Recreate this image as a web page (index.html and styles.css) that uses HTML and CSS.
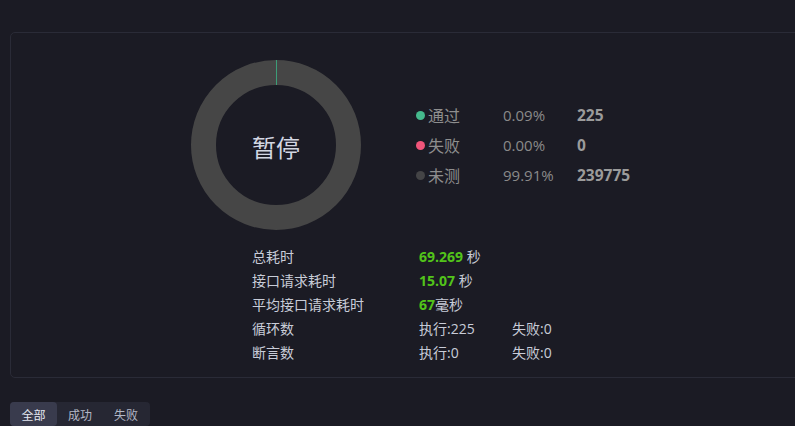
FILE: index.html
```html
<!DOCTYPE html>
<html lang="zh">
<head>
<meta charset="utf-8">
<link rel="stylesheet" href="styles.css">
</head>
<body>
<div class="page">
  <section class="card">
    <div class="top">
      <div class="donut">
        <svg width="170" height="170" viewBox="0 0 170 170">
          <circle cx="85" cy="85" r="72.5" fill="none" stroke="#464646" stroke-width="25"/>
          <line x1="85.5" y1="0" x2="85.5" y2="25" stroke="#3c9d78" stroke-width="1"/>
        </svg>
        <div class="donut-label">暂停</div>
      </div>
      <ul class="legend">
        <li class="legend-row"><span class="dot dot-pass"></span><span class="l-name">通过</span><span class="l-pct">0.09%</span><span class="l-count">225</span></li>
        <li class="legend-row"><span class="dot dot-fail"></span><span class="l-name">失败</span><span class="l-pct">0.00%</span><span class="l-count">0</span></li>
        <li class="legend-row"><span class="dot dot-none"></span><span class="l-name">未测</span><span class="l-pct">99.91%</span><span class="l-count">239775</span></li>
      </ul>
    </div>
    <div class="stats">
      <div class="s-row"><span class="s-label">总耗时</span><span class="s-val"><b class="g">69.269</b> 秒</span></div>
      <div class="s-row"><span class="s-label">接口请求耗时</span><span class="s-val"><b class="g">15.07</b> 秒</span></div>
      <div class="s-row"><span class="s-label">平均接口请求耗时</span><span class="s-val"><b class="g">67</b>毫秒</span></div>
      <div class="s-row"><span class="s-label">循环数</span><span class="s-val">执行:225</span><span class="s-third">失败:0</span></div>
      <div class="s-row"><span class="s-label">断言数</span><span class="s-val">执行:0</span><span class="s-third">失败:0</span></div>
    </div>
  </section>
  <nav class="tabs">
    <span class="tab active">全部</span>
    <span class="tab">成功</span>
    <span class="tab">失败</span>
  </nav>
</div>
</body>
</html>
```

FILE: styles.css
```css
html, body {
  margin: 0;
  padding: 0;
  background: #1b1b24;
  overflow: hidden;
}
body {
  width: 795px;
  height: 426px;
  font-family: "Open Sans", "Noto Sans CJK SC", sans-serif;
  color: #c8ccd8;
}
.page {
  padding: 32px 0 0 10px;
}
.card {
  width: 820px;
  height: 346px;
  border: 1px solid #2a2b37;
  border-radius: 5px;
  box-sizing: border-box;
  padding: 27px 0 0 180px;
}
.top {
  display: flex;
  align-items: center;
}
.donut {
  position: relative;
  width: 170px;
  height: 170px;
}
.donut svg { display: block; }
.donut-label {
  position: absolute;
  inset: 0;
  display: flex;
  align-items: center;
  justify-content: center;
  font-family: "Noto Sans CJK SC", sans-serif;
  font-size: 24px;
  color: #d2d6e2;
  padding-top: 2px;
}
.legend {
  list-style: none;
  margin: 0 0 0 55px;
  padding: 0;
  display: flex;
  flex-direction: column;
  gap: 8px;
  margin-top: 0px;
}
.legend-row {
  display: flex;
  align-items: center;
  height: 22px;
}
.dot {
  width: 9px;
  height: 9px;
  border-radius: 50%;
  margin-right: 3px;
}
.dot-pass { background: #45b98c; }
.dot-fail { background: #f0557a; }
.dot-none { background: #444446; }
.l-name {
  width: 75px;
  font-family: "Noto Sans CJK SC", sans-serif;
  font-size: 16px;
  color: #8e8e8e;
}
.l-pct {
  width: 74px;
  font-size: 15px;
  color: #8a8a8a;
}
.l-count {
  font-size: 15.5px;
  font-weight: 700;
  color: #9b9b9b;
}
.stats {
  margin: 14px 0 0 61px;
  display: flex;
  flex-direction: column;
}
.s-row {
  display: flex;
  height: 24px;
  align-items: center;
  font-size: 14px;
  font-family: "Open Sans", "Noto Sans CJK SC", sans-serif;
}
.s-label {
  width: 167px;
  color: #c8ccd8;
}
.s-val {
  width: 93px;
  color: #c8ccd8;
}
.s-third { color: #c8ccd8; }
.g {
  color: #52c41a;
  font-weight: 700;
}
.tabs {
  display: inline-flex;
  margin-top: 24px;
  background: #262733;
  border-radius: 4px;
  height: 24px;
  width: 140px;
  font-family: "Noto Sans CJK SC", sans-serif;
  font-size: 12px;
}
.tab {
  width: 46px;
  display: flex;
  align-items: center;
  justify-content: center;
  color: #b3b7c6;
  border-radius: 4px;
}
.tab.active {
  width: 47px;
  background: #393b4d;
  color: #e4e8f2;
}
```
